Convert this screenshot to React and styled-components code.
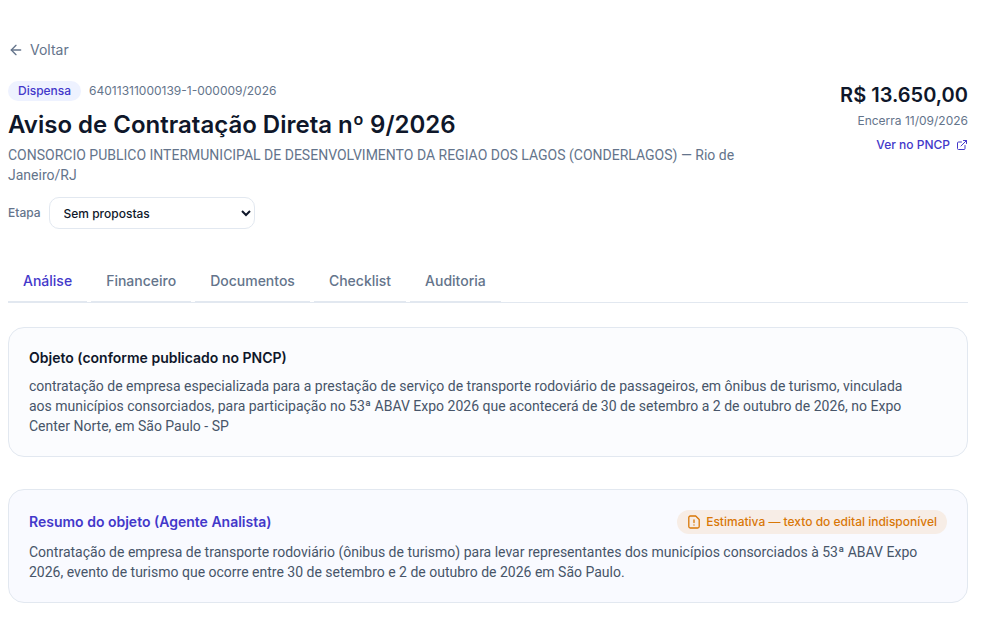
import React, { useState } from "react";
import styled, { createGlobalStyle } from "styled-components";
import { ArrowLeft, ExternalLink } from "lucide-react";

const GlobalStyle = createGlobalStyle`
  *, *::before, *::after { box-sizing: border-box; }
  body {
    margin: 0;
    background: #ffffff;
    color: #0f172a;
    font-family: Inter, "Liberation Sans", sans-serif;
    font-size: 14px;
    line-height: 20px;
  }
  h1, h2, p { margin: 0; }
  button, select { font-family: inherit; }
`;

const Page = styled.main`
  padding: 40px 32px 16px 8px;
`;

const BackLink = styled.a`
  display: inline-flex;
  align-items: center;
  gap: 6px;
  color: #64748b;
  text-decoration: none;
  vertical-align: top;
`;

const Header = styled.header`
  display: flex;
  align-items: flex-start;
  justify-content: space-between;
  gap: 16px;
  margin-top: 21px;
`;

const Heading = styled.div`
  flex: 1;
  min-width: 0;
  max-width: 768px;
`;

const Meta = styled.div`
  display: flex;
  align-items: center;
  gap: 8px;
  margin-bottom: 8px;
  font-size: 12px;
  color: #64748b;
`;

const Tag = styled.span`
  padding: 0 10px;
  border-radius: 10px;
  background: #eef2ff;
  color: #4338ca;
  font-weight: 500;
`;

const Title = styled.h1`
  font-size: 24px;
  line-height: 32px;
  font-weight: 600;
`;

const BodyText = styled.p`
  max-width: 896px;
  color: #475569;
  font-family: Roboto, "Liberation Sans", sans-serif;
`;

const Agency = styled(BodyText)`
  margin-top: 4px;
  color: #64748b;
`;

const StageField = styled.div`
  display: flex;
  align-items: center;
  gap: 8px;
  margin-top: 12px;
  font-size: 12px;
  font-weight: 500;
  color: #64748b;
`;

const StageSelect = styled.select`
  width: 206px;
  height: 32px;
  padding: 0 0 0 10px;
  border: 1px solid #e2e8f0;
  border-radius: 10px;
  background: #ffffff;
  color: #0f172a;
  font-size: 12px;
  font-weight: 500;
`;

const Summary = styled.div`
  display: flex;
  flex-direction: column;
  align-items: flex-end;
  flex-shrink: 0;
  font-size: 12px;
  line-height: 16px;
  color: #64748b;
`;

const Price = styled.p`
  margin-bottom: 4px;
  font-size: 20px;
  line-height: 28px;
  font-weight: 600;
  color: #0f172a;
`;

const SourceLink = styled.a`
  display: inline-flex;
  align-items: center;
  gap: 6px;
  margin-top: 8px;
  color: #4338ca;
  font-weight: 500;
  text-decoration: none;
`;

const Tabs = styled.div`
  display: flex;
  gap: 4px;
  margin-top: 32px;
  border-bottom: 1px solid #e2e8f0;
`;

const Tab = styled.button`
  margin: 0 0 -1px;
  padding: 10px 15px;
  border: 0;
  border-bottom: 2px solid #e2e8f0;
  background: transparent;
  color: ${(p) => (p.$active ? "#4338ca" : "#64748b")};
  font-size: 14px;
  line-height: 20px;
  font-weight: 500;
  cursor: pointer;
`;

const Card = styled.section`
  margin-top: ${(p) => (p.$accent ? 32 : 24)}px;
  padding: 20px;
  border: 1px solid #e2e8f0;
  border-radius: 16px;
  background: ${(p) => (p.$accent ? "#f9faff" : "#fbfcfe")};
`;

const CardHeader = styled.div`
  display: flex;
  align-items: center;
  justify-content: space-between;
  gap: 16px;
  margin-bottom: 8px;
`;

const CardTitle = styled.h2`
  font-size: 14px;
  line-height: 20px;
  font-weight: 600;
  color: ${(p) => (p.$accent ? "#4338ca" : "#0f172a")};
`;

const Notice = styled.span`
  display: inline-flex;
  align-items: center;
  gap: 5px;
  padding: 2px 10px;
  border-radius: 12px;
  background: #f7ede6;
  color: #d97706;
  font-size: 12px;
  font-weight: 500;
`;

const FileAlertIcon = () => (
  <svg width="14" height="14" viewBox="0 0 14 14" fill="none" stroke="currentColor" strokeWidth="1.3" strokeLinecap="round" strokeLinejoin="round" aria-hidden="true">
    <path d="M8.7 1H3.3a1.5 1.5 0 0 0-1.5 1.5v9A1.5 1.5 0 0 0 3.3 13h7.4a1.5 1.5 0 0 0 1.5-1.5v-7Z" />
    <path d="M7 5v2.6" />
    <path d="M7 10h.01" />
  </svg>
);

const tabs = ["Análise", "Financeiro", "Documentos", "Checklist", "Auditoria"];

export default function App() {
  const [active, setActive] = useState("Análise");
  return (
    <>
      <GlobalStyle />
      <Page>
        <BackLink href="#">
          <ArrowLeft size={16} aria-hidden="true" />
          Voltar
        </BackLink>
        <Header>
          <Heading>
            <Meta>
              <Tag>Dispensa</Tag>
              <span>64011311000139-1-000009/2026</span>
            </Meta>
            <Title>Aviso de Contratação Direta nº 9/2026</Title>
            <Agency>
              CONSORCIO PUBLICO INTERMUNICIPAL DE DESENVOLVIMENTO DA REGIAO DOS LAGOS (CONDERLAGOS) — Rio de Janeiro/RJ
            </Agency>
            <StageField>
              <label htmlFor="stage">Etapa</label>
              <StageSelect id="stage">
                <option>Sem propostas</option>
              </StageSelect>
            </StageField>
          </Heading>
          <Summary>
            <Price>R$ 13.650,00</Price>
            <p>Encerra 11/09/2026</p>
            <SourceLink href="#">
              Ver no PNCP
              <ExternalLink size={12} aria-hidden="true" />
            </SourceLink>
          </Summary>
        </Header>
        <Tabs role="tablist">
          {tabs.map((name) => (
            <Tab key={name} type="button" role="tab" aria-selected={name === active} $active={name === active} onClick={() => setActive(name)}>
              {name}
            </Tab>
          ))}
        </Tabs>
        <Card>
          <CardHeader>
            <CardTitle>Objeto (conforme publicado no PNCP)</CardTitle>
          </CardHeader>
          <BodyText>
            contratação de empresa especializada para a prestação de serviço de transporte rodoviário de passageiros, em ônibus de turismo, vinculada aos municípios consorciados, para participação no 53ª ABAV Expo 2026 que acontecerá de 30 de setembro a 2 de outubro de 2026, no Expo Center Norte, em São Paulo - SP
          </BodyText>
        </Card>
        <Card $accent>
          <CardHeader>
            <CardTitle $accent>Resumo do objeto (Agente Analista)</CardTitle>
            <Notice>
              <FileAlertIcon />
              Estimativa — texto do edital indisponível
            </Notice>
          </CardHeader>
          <BodyText>
            Contratação de empresa de transporte rodoviário (ônibus de turismo) para levar representantes dos municípios consorciados à 53ª ABAV Expo 2026, evento de turismo que ocorre entre 30 de setembro e 2 de outubro de 2026 em São Paulo.
          </BodyText>
        </Card>
      </Page>
    </>
  );
}
